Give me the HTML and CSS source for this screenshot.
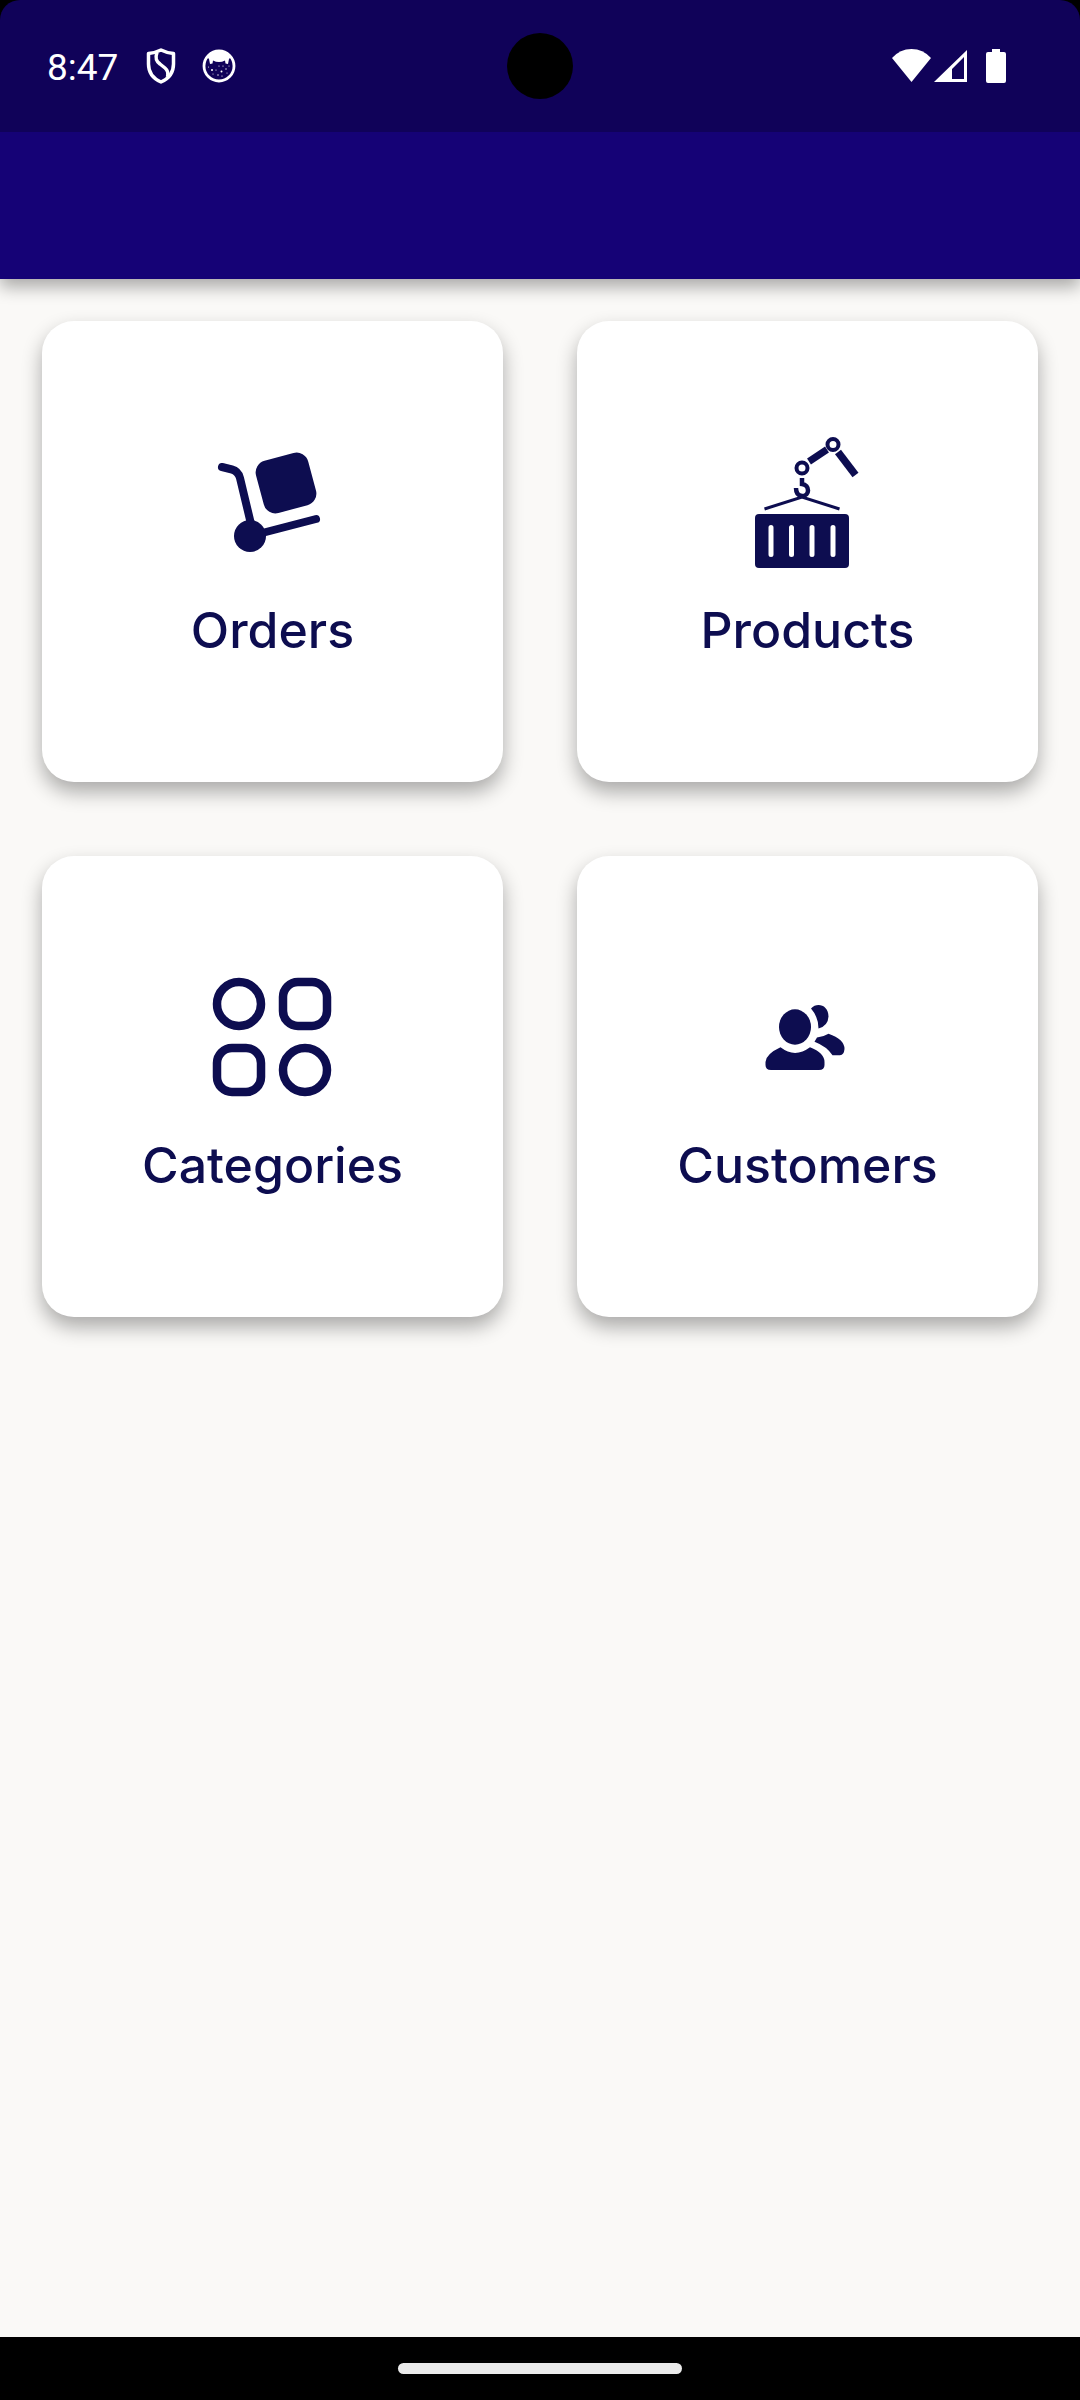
FILE: index.html
```html
<!DOCTYPE html>
<html lang="en">
<head>
<meta charset="utf-8">
<meta name="viewport" content="width=device-width, initial-scale=1">
<title>Dashboard</title>
<link rel="stylesheet" href="styles.css">
</head>
<body>
<div class="screen">
  <header class="top">
    <div class="status">
      <div class="status-left">
        <span class="time">8:47</span>
        <svg class="shield" width="30" height="36" viewBox="0 0 30 36" fill="none" stroke="#fff" stroke-width="3.500" stroke-linejoin="round" aria-hidden="true">
          <path d="M15 2Q21 5 27.500 5.500V16C27.500 25 22 31 15 34C8 31 2.500 25 2.500 16V5.500Q9 5 15 2Z"/>
          <path d="M11 4.500C9 10 10 13 14 16L19 20C22 22.500 22.500 25 21.500 29"/>
        </svg>
        <svg width="34" height="34" viewBox="0 0 34 34" aria-hidden="true">
          <circle cx="17" cy="17" r="15" fill="none" stroke="#fff" stroke-width="2.800"/>
          <path fill="#fff" d="M5 8Q10 2 17 2T29 8L27 10L26 15L23.500 14.500L23 11.500Q20 13 17 13T11 11.500L10.500 14.500L8 15L7 10Z"/>
          <g fill="#fff"><circle cx="10" cy="21" r="1"/><circle cx="19.500" cy="22.500" r="1"/><circle cx="14" cy="21" r=".6"/><circle cx="24" cy="20" r=".7"/><circle cx="16" cy="26" r=".7"/><circle cx="21" cy="17" r=".6"/><circle cx="11" cy="25" r=".5"/><circle cx="17" cy="17" r=".6"/><circle cx="6.500" cy="18" r=".5"/><circle cx="20" cy="27" r=".6"/><circle cx="27" cy="17" r=".5"/><circle cx="25" cy="24" r=".5"/></g>
        </svg>
      </div>
      <span class="camera"></span>
      <div class="status-right">
        <svg width="39" height="34" viewBox="0 0 39 34" fill="#fff" aria-hidden="true"><path d="M0 9Q8 0 19.500 0T39 9L19.500 33Z"/></svg>
        <svg width="33" height="34" viewBox="0 0 33 34" fill="#fff" fill-rule="evenodd" aria-hidden="true"><path d="M33 1V33H0ZM30 8L18 20V30H30Z"/></svg>
        <svg class="battery" width="20" height="34" viewBox="0 0 20 34" fill="#fff" aria-hidden="true"><path d="M6 0H14V3H18Q20 3 20 5V32Q20 34 18 34H2Q0 34 0 32V5Q0 3 2 3H6Z"/></svg>
      </div>
    </div>
    <div class="appbar"></div>
  </header>
  <main class="grid">
    <a class="card" href="#orders">
      <svg class="icon" viewBox="1 0 144 144" aria-hidden="true">
        <path d="M22 37L32 39.500Q38 41 40 48L51 94M64 102.500L116 89" fill="none" stroke="currentColor" stroke-width="8" stroke-linecap="round"/>
        <circle cx="50" cy="106" r="16" fill="currentColor"/>
        <rect x="59" y="26" width="54" height="54" rx="12" transform="rotate(-15 86 53)" fill="currentColor"/>
      </svg>
      <span class="label">Orders</span>
    </a>
    <a class="card" href="#products">
      <svg class="icon" viewBox="1 0 144 144" fill="none" stroke="currentColor" aria-hidden="true">
        <path stroke-width="7" d="M74 31.500L92 19.500"/>
        <path stroke-width="7.500" d="M103 22L120.500 45"/>
        <circle cx="67" cy="38" r="5.500" stroke-width="4"/>
        <circle cx="98" cy="14.500" r="5.500" stroke-width="4"/>
        <path stroke-width="4.500" d="M67 48V54C75 55 75 66 67 66Q61 65.500 61 58"/>
        <path stroke-width="3" d="M29.500 79L67 67L104.500 79"/>
        <rect x="20" y="84" width="94" height="54" rx="4" fill="currentColor" stroke="none"/>
        <path stroke="#fff" stroke-width="5" stroke-linecap="round" d="M36 97.500V124.500M56.500 97.500V124.500M77 97.500V124.500M98 97.500V124.500"/>
      </svg>
      <span class="label">Products</span>
    </a>
    <a class="card" href="#categories">
      <svg class="icon" viewBox="1 0 144 144" fill="none" stroke="currentColor" stroke-width="8.500" aria-hidden="true">
        <circle cx="39" cy="39" r="22"/>
        <rect x="83" y="17" width="44" height="44" rx="15"/>
        <rect x="17" y="83" width="44" height="44" rx="15"/>
        <circle cx="105" cy="105" r="22"/>
      </svg>
      <span class="label">Categories</span>
    </a>
    <a class="card" href="#customers">
      <svg class="icon" viewBox="1 0 144 144" fill="currentColor" aria-hidden="true">
        <ellipse cx="60" cy="62" rx="16" ry="17.700"/>
        <path d="M45.500 82.300Q60 93.500 75 82.300Q89.500 88 89.500 97V100Q89.500 105 84 105H36Q30.500 105 30.500 100V97Q31 89 45.500 82.300Z"/>
        <path d="M76 43.500C82 37 93.500 40 93.500 51.500Q93 61 83.500 63.500Q83.500 52 76 43.500Z"/>
        <path d="M82 72.500Q88 72 93.500 68.700Q109.500 74 109.500 84Q109 90 105 90.300H97.500Q92 81.500 79.500 76.700Z"/>
      </svg>
      <span class="label">Customers</span>
    </a>
  </main>
  <footer class="navbar"><span class="pill"></span></footer>
</div>
</body>
</html>
```
FILE: styles.css
```css
* {
  box-sizing: border-box;
}

body {
  margin: 0;
  background: #000;
}

.screen {
  display: flex;
  flex-direction: column;
  min-height: 100vh;
}

.top {
  position: relative;
  box-shadow: 0 8px 16px rgba(0, 0, 0, 0.32);
  z-index: 1;
  background: #000;
}

.status {
  position: relative;
  display: flex;
  align-items: center;
  justify-content: space-between;
  height: 132px;
  padding: 0 74px 0 47px;
  background: #100259;
  border-radius: 20px 20px 0 0;
}

.status-left,
.status-right {
  display: flex;
  align-items: center;
}

.time {
  font: 400 37px/48px Roboto, sans-serif;
  color: #fff;
  margin-right: 28px;
  padding-top: 3px;
}

.shield {
  margin-right: 26px;
}

.camera {
  position: absolute;
  left: 50%;
  top: 50%;
  width: 66px;
  height: 66px;
  border-radius: 50%;
  background: #000;
  transform: translate(-50%, -50%);
}

.status-right {
  gap: 3px;
}

.battery {
  margin-left: 16px;
}

.appbar {
  height: 147px;
  background: #150276;
}

.grid {
  flex: 1;
  display: grid;
  grid-template-columns: 1fr 1fr;
  align-content: start;
  gap: 74px;
  padding: 42px;
  background: #faf9f7;
}

.card {
  display: flex;
  flex-direction: column;
  align-items: center;
  gap: 20px;
  aspect-ratio: 1;
  padding-top: 109px;
  border-radius: 32px;
  background: #fff;
  box-shadow: 0 10px 20px rgba(0, 0, 0, 0.32);
  color: #0d0d50;
  text-decoration: none;
}

.icon {
  width: 144px;
  height: 144px;
}

.label {
  font: 500 50px/72px Inter, sans-serif;
}

.navbar {
  display: flex;
  justify-content: center;
  height: 63px;
  padding-top: 26px;
  background: #000;
}

.pill {
  width: 284px;
  height: 11px;
  border-radius: 6px;
  background: #ebebeb;
}
```
